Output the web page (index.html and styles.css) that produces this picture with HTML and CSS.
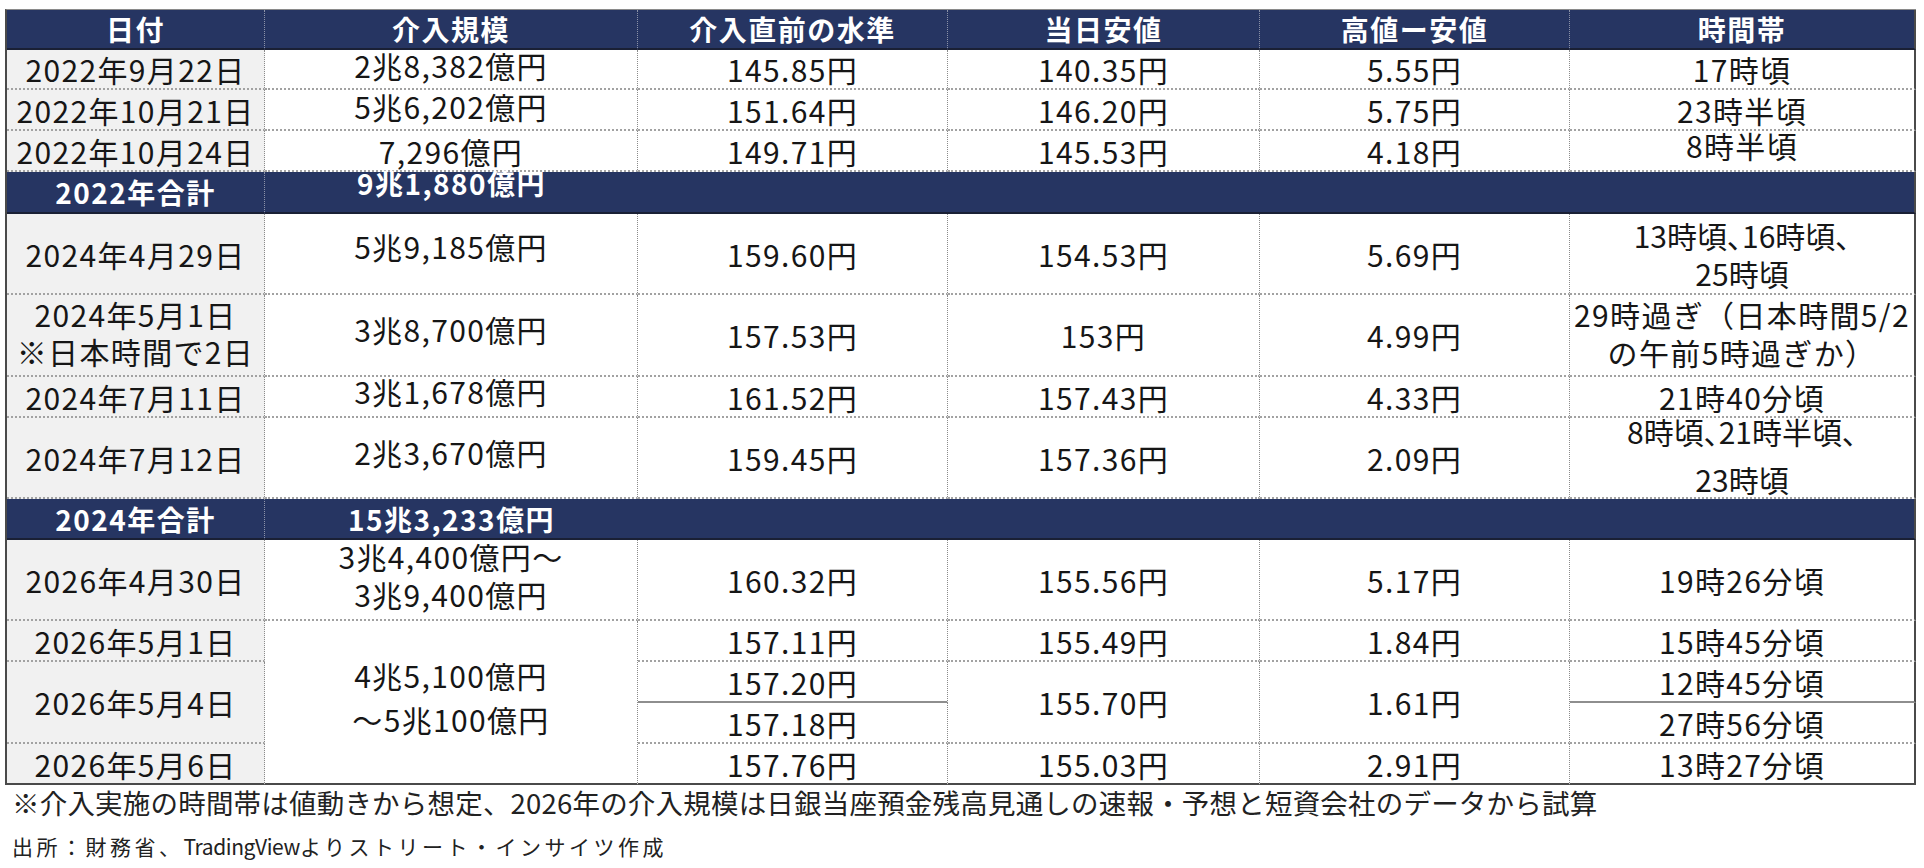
FILE: index.html
```html
<!DOCTYPE html>
<html lang="ja">
<head>
<meta charset="utf-8">
<title>為替介入の実績</title>
<link rel="stylesheet" href="styles.css">
</head>
<body>
<div class="page">
  <div class="tbl">
    <div class="c hd">日付</div>
    <div class="c hd">介入規模</div>
    <div class="c hd">介入直前の水準</div>
    <div class="c hd">当日安値</div>
    <div class="c hd">高値ー安値</div>
    <div class="c hd c6">時間帯</div>

    <div class="c d">2022年9月22日</div>
    <div class="c up4">2兆8,382億円</div>
    <div class="c">145.85円</div>
    <div class="c">140.35円</div>
    <div class="c">5.55円</div>
    <div class="c c6">17時頃</div>

    <div class="c d">2022年10月21日</div>
    <div class="c up4">5兆6,202億円</div>
    <div class="c">151.64円</div>
    <div class="c">146.20円</div>
    <div class="c">5.75円</div>
    <div class="c c6">23時半頃</div>

    <div class="c d">2022年10月24日</div>
    <div class="c">7,296億円</div>
    <div class="c">149.71円</div>
    <div class="c">145.53円</div>
    <div class="c">4.18円</div>
    <div class="c c6 up6">8時半頃</div>

    <div class="c st">2022年合計</div>
    <div class="c st nr up9">9兆1,880億円</div>
    <div class="c st c6 span4"></div>

    <div class="c d">2024年4月29日</div>
    <div class="c up8">5兆9,185億円</div>
    <div class="c">159.60円</div>
    <div class="c">154.53円</div>
    <div class="c">5.69円</div>
    <div class="c c6 multi palt"><span>13時頃、16時頃、</span><span>25時頃</span></div>

    <div class="c d multi lh37 up2"><span>2024年5月1日</span><span>※日本時間で2日</span></div>
    <div class="c up6">3兆8,700億円</div>
    <div class="c">157.53円</div>
    <div class="c">153円</div>
    <div class="c">4.99円</div>
    <div class="c c6 multi up2"><span>29時過ぎ（日本時間5/2</span><span>の午前5時過ぎか）</span></div>

    <div class="c d">2024年7月11日</div>
    <div class="c up6">3兆1,678億円</div>
    <div class="c">161.52円</div>
    <div class="c">157.43円</div>
    <div class="c">4.33円</div>
    <div class="c c6">21時40分頃</div>

    <div class="c d">2024年7月12日</div>
    <div class="c up6">2兆3,670億円</div>
    <div class="c">159.45円</div>
    <div class="c">157.36円</div>
    <div class="c">2.09円</div>
    <div class="c c6 multi palt lh48 up3"><span>8時頃、21時半頃、</span><span>23時頃</span></div>

    <div class="c st">2024年合計</div>
    <div class="c st nr">15兆3,233億円</div>
    <div class="c st c6 span4"></div>

    <div class="c d">2026年4月30日</div>
    <div class="c multi up5"><span>3兆4,400億円～</span><span>3兆9,400億円</span></div>
    <div class="c">160.32円</div>
    <div class="c">155.56円</div>
    <div class="c">5.17円</div>
    <div class="c c6">19時26分頃</div>

    <div class="c d">2026年5月1日</div>
    <div class="c multi lh44 up5 rows4 last"><span>4兆5,100億円</span><span>～5兆100億円</span></div>
    <div class="c">157.11円</div>
    <div class="c">155.49円</div>
    <div class="c">1.84円</div>
    <div class="c c6">15時45分頃</div>

    <div class="c d rows2">2026年5月4日</div>
    <div class="c solid">157.20円</div>
    <div class="c rows2">155.70円</div>
    <div class="c rows2">1.61円</div>
    <div class="c c6 solid">12時45分頃</div>
    <div class="c">157.18円</div>
    <div class="c c6">27時56分頃</div>

    <div class="c d last">2026年5月6日</div>
    <div class="c last">157.76円</div>
    <div class="c last">155.03円</div>
    <div class="c last">2.91円</div>
    <div class="c c6 last">13時27分頃</div>
  </div>

  <p class="fn1">※介入実施の時間帯は値動きから想定、2026年の介入規模は日銀当座預金残高見通しの速報・予想と短資会社のデータから試算</p>
  <p class="fn2">出所：財務省、<span class="latin">TradingView</span>よりストリート・インサイツ作成</p>
</div>
</body>
</html>
```

FILE: styles.css
```css
html, body {
  margin: 0;
  padding: 0;
  background: #ffffff;
}

body {
  font-family: "Noto Sans CJK JP", "Noto Sans", sans-serif;
  color: #161616;
}

.page {
  padding: 9px 0 0 5px;
  width: 1919px;
  height: 859px;
  overflow: hidden;
}

.tbl {
  display: grid;
  width: 1911px;
  box-sizing: border-box;
  grid-template-columns: 258px 373px 310px 312px 310px 346px;
  grid-template-rows: 40px 40px 41px 41px 42px 81px 82px 41px 81px 41px 81px 41px 41px 41px 41px;
  border-left: 2px solid #4a4a4a;
  border-top: 1px solid #8a8a8a;
}

.c {
  box-sizing: border-box;
  display: flex;
  flex-direction: column;
  align-items: center;
  justify-content: center;
  text-align: center;
  white-space: nowrap;
  font-size: 30px;
  letter-spacing: 1.35px;
  line-height: 38px;
  background: #ffffff;
  border-right: 1px dotted #8a8a8a;
  border-bottom: 2px dotted #a2a2a2;
}

.c6 {
  border-right: 2px solid #4a4a4a;
}

.d {
  background: #f1f1f1;
}

.hd {
  background: #263562;
  color: #ffffff;
  font-weight: 700;
  font-size: 28px;
  letter-spacing: 1.5px;
  border-right: 1px dotted #8d93a8;
  border-bottom: 2px solid #1a2035;
}

.hd.c6 {
  border-right: 2px solid #4a4a4a;
}

.st {
  background: #263562;
  color: #ffffff;
  font-weight: 700;
  font-size: 28px;
  letter-spacing: 1.5px;
  border-right: 1px dotted #8d93a8;
  border-bottom: 2px solid #1a2035;
}

.st.nr {
  border-right: none;
}

.st.c6 {
  border-right: 2px solid #4a4a4a;
}

.span4 {
  grid-column: span 4;
}

.rows2 {
  grid-row: span 2;
}

.rows4 {
  grid-row: span 4;
}

.solid {
  border-bottom: 2px solid #8e8e8e;
}

.last {
  border-bottom: 2px solid #4a4a4a;
}

.multi span {
  display: block;
}

.palt {
  font-feature-settings: "palt" 1;
  letter-spacing: 0;
}

.lh37 { line-height: 37px; }
.lh44 { line-height: 44px; }
.lh48 { line-height: 48px; }

.up2 { padding-bottom: 4px; }
.up3 { padding-bottom: 6px; }
.up4 { padding-bottom: 8px; }
.up5 { padding-bottom: 10px; }
.up6 { padding-bottom: 12px; }
.up8 { padding-bottom: 16px; }
.up9 { padding-bottom: 18px; }

.fn1 {
  margin: 2px 0 0 7px;
  font-size: 27.5px;
  line-height: 30px;
  letter-spacing: 0.2px;
  color: #222222;
  white-space: nowrap;
}

.fn2 {
  margin: 14px 0 0 7px;
  font-size: 21px;
  line-height: 30px;
  letter-spacing: 3.5px;
  color: #222222;
  white-space: nowrap;
}

.fn2 .latin {
  letter-spacing: -0.4px;
}
```
